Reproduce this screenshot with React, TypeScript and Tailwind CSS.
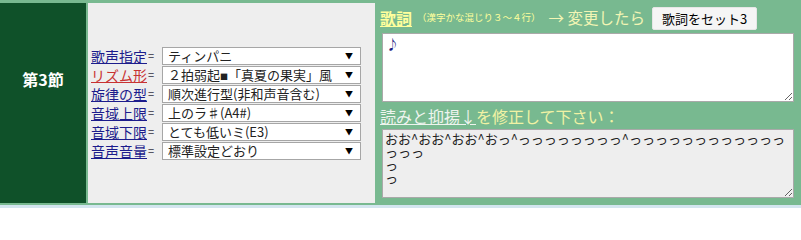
import React from "react";

const FONT = { fontFamily: '"Noto Sans CJK JP", "Noto Sans", sans-serif' };

const rows = [
  { label: "歌声指定", value: "ティンパニ", red: false },
  { label: "リズム形", value: "rhythm", red: true },
  { label: "旋律の型", value: "順次進行型(非和声音含む)", red: false },
  { label: "音域上限", value: "上のラ♯(A4#)", red: false },
  { label: "音域下限", value: "とても低いミ(E3)", red: false },
  { label: "音声音量", value: "標準設定どおり", red: false },
];

const yomi =
  "おお^おお^おお^おっ^っっっっっっっっ^っっっっっっっっっっっっ\nっっっ\nっ\nっ";

function FakeSelect({ value }: { value: string }) {
  return (
    <div className="flex h-[18px] w-[199px] items-center justify-between border border-[#a6a6a6] bg-white pl-[5px] pr-[7px]">
      {value === "rhythm" ? (
        <span className="whitespace-nowrap text-[13px] leading-none text-[#222]">
          ２拍弱起<span className="text-[8px]">■</span>「真夏の果実」風
        </span>
      ) : (
        <span className="whitespace-nowrap text-[13px] leading-none text-[#222]">{value}</span>
      )}
      <span className="text-[8px] leading-none text-black">▼</span>
    </div>
  );
}

export default function App() {
  return (
    <div className="h-[208px] w-[801px] overflow-hidden bg-[#d3e5ef]" style={FONT}>
      <div className="flex h-[205px] gap-[2px] bg-[#78b990] pb-[2px] pt-[3px]">
        {/* section title */}
        <div className="flex w-[86px] shrink-0 justify-center bg-[#0f5129] pt-[64px]">
          <span className="text-[16px] font-bold leading-[24px] text-white">第3節</span>
        </div>

        {/* settings */}
        <div className="flex w-[287px] shrink-0 flex-col justify-center gap-[1px] bg-[#eeeeee] pl-[3px]">
          {rows.map((r) => (
            <div key={r.label} className="flex h-[18px] items-center">
              <div className="flex w-[71px] items-center">
                <a
                  className={
                    r.red
                      ? "text-[14px] leading-none text-[#c83232] underline"
                      : "text-[14px] leading-none text-[#1c1c8c] underline"
                  }
                >
                  {r.label}
                </a>
                <span className="ml-[1px] text-[11px] leading-none text-[#334]">=</span>
              </div>
              <FakeSelect value={r.value} />
            </div>
          ))}
        </div>

        {/* lyrics */}
        <div className="flex flex-1 flex-col pl-[3px]">
          <div className="flex h-[30px] items-center">
            <span className="text-[16px] font-bold leading-none text-[#ffff9c] underline">歌詞</span>
            <span className="ml-[5px] text-[9.5px] leading-none text-[#ffff9c]">（漢字かな混じり３～４行）</span>
            <span className="ml-[8px] text-[15.5px] leading-none text-[#f2f5b4]">→ 変更したら</span>
            <button className="ml-[7px] h-[23px] rounded-[2px] border border-[#e6e6e6] bg-[#f5f5f5] px-[9px] text-[13px] leading-none text-black">
              歌詞をセット3
            </button>
          </div>
          <textarea
            className="ml-[2px] h-[69px] w-[412px] border border-[#a9a9a9] bg-white px-[3px] py-[2px] text-[13px] leading-[16px] text-[#1c1c80] outline-none"
            defaultValue="♪"
          />
          <div className="flex h-[27px] items-center">
            <a className="text-[16px] leading-none text-[#eef4ee] underline">読みと抑揚↓</a>
            <span className="text-[16px] leading-none text-[#f0f2a4]">を修正して下さい：</span>
          </div>
          <textarea
            className="ml-[2px] h-[69px] w-[412px] border border-[#a9a9a9] bg-[#eeeeee] px-[2px] py-[2px] text-[13px] leading-[13px] text-[#222] outline-none"
            defaultValue={yomi}
          />
        </div>
      </div>
    </div>
  );
}
